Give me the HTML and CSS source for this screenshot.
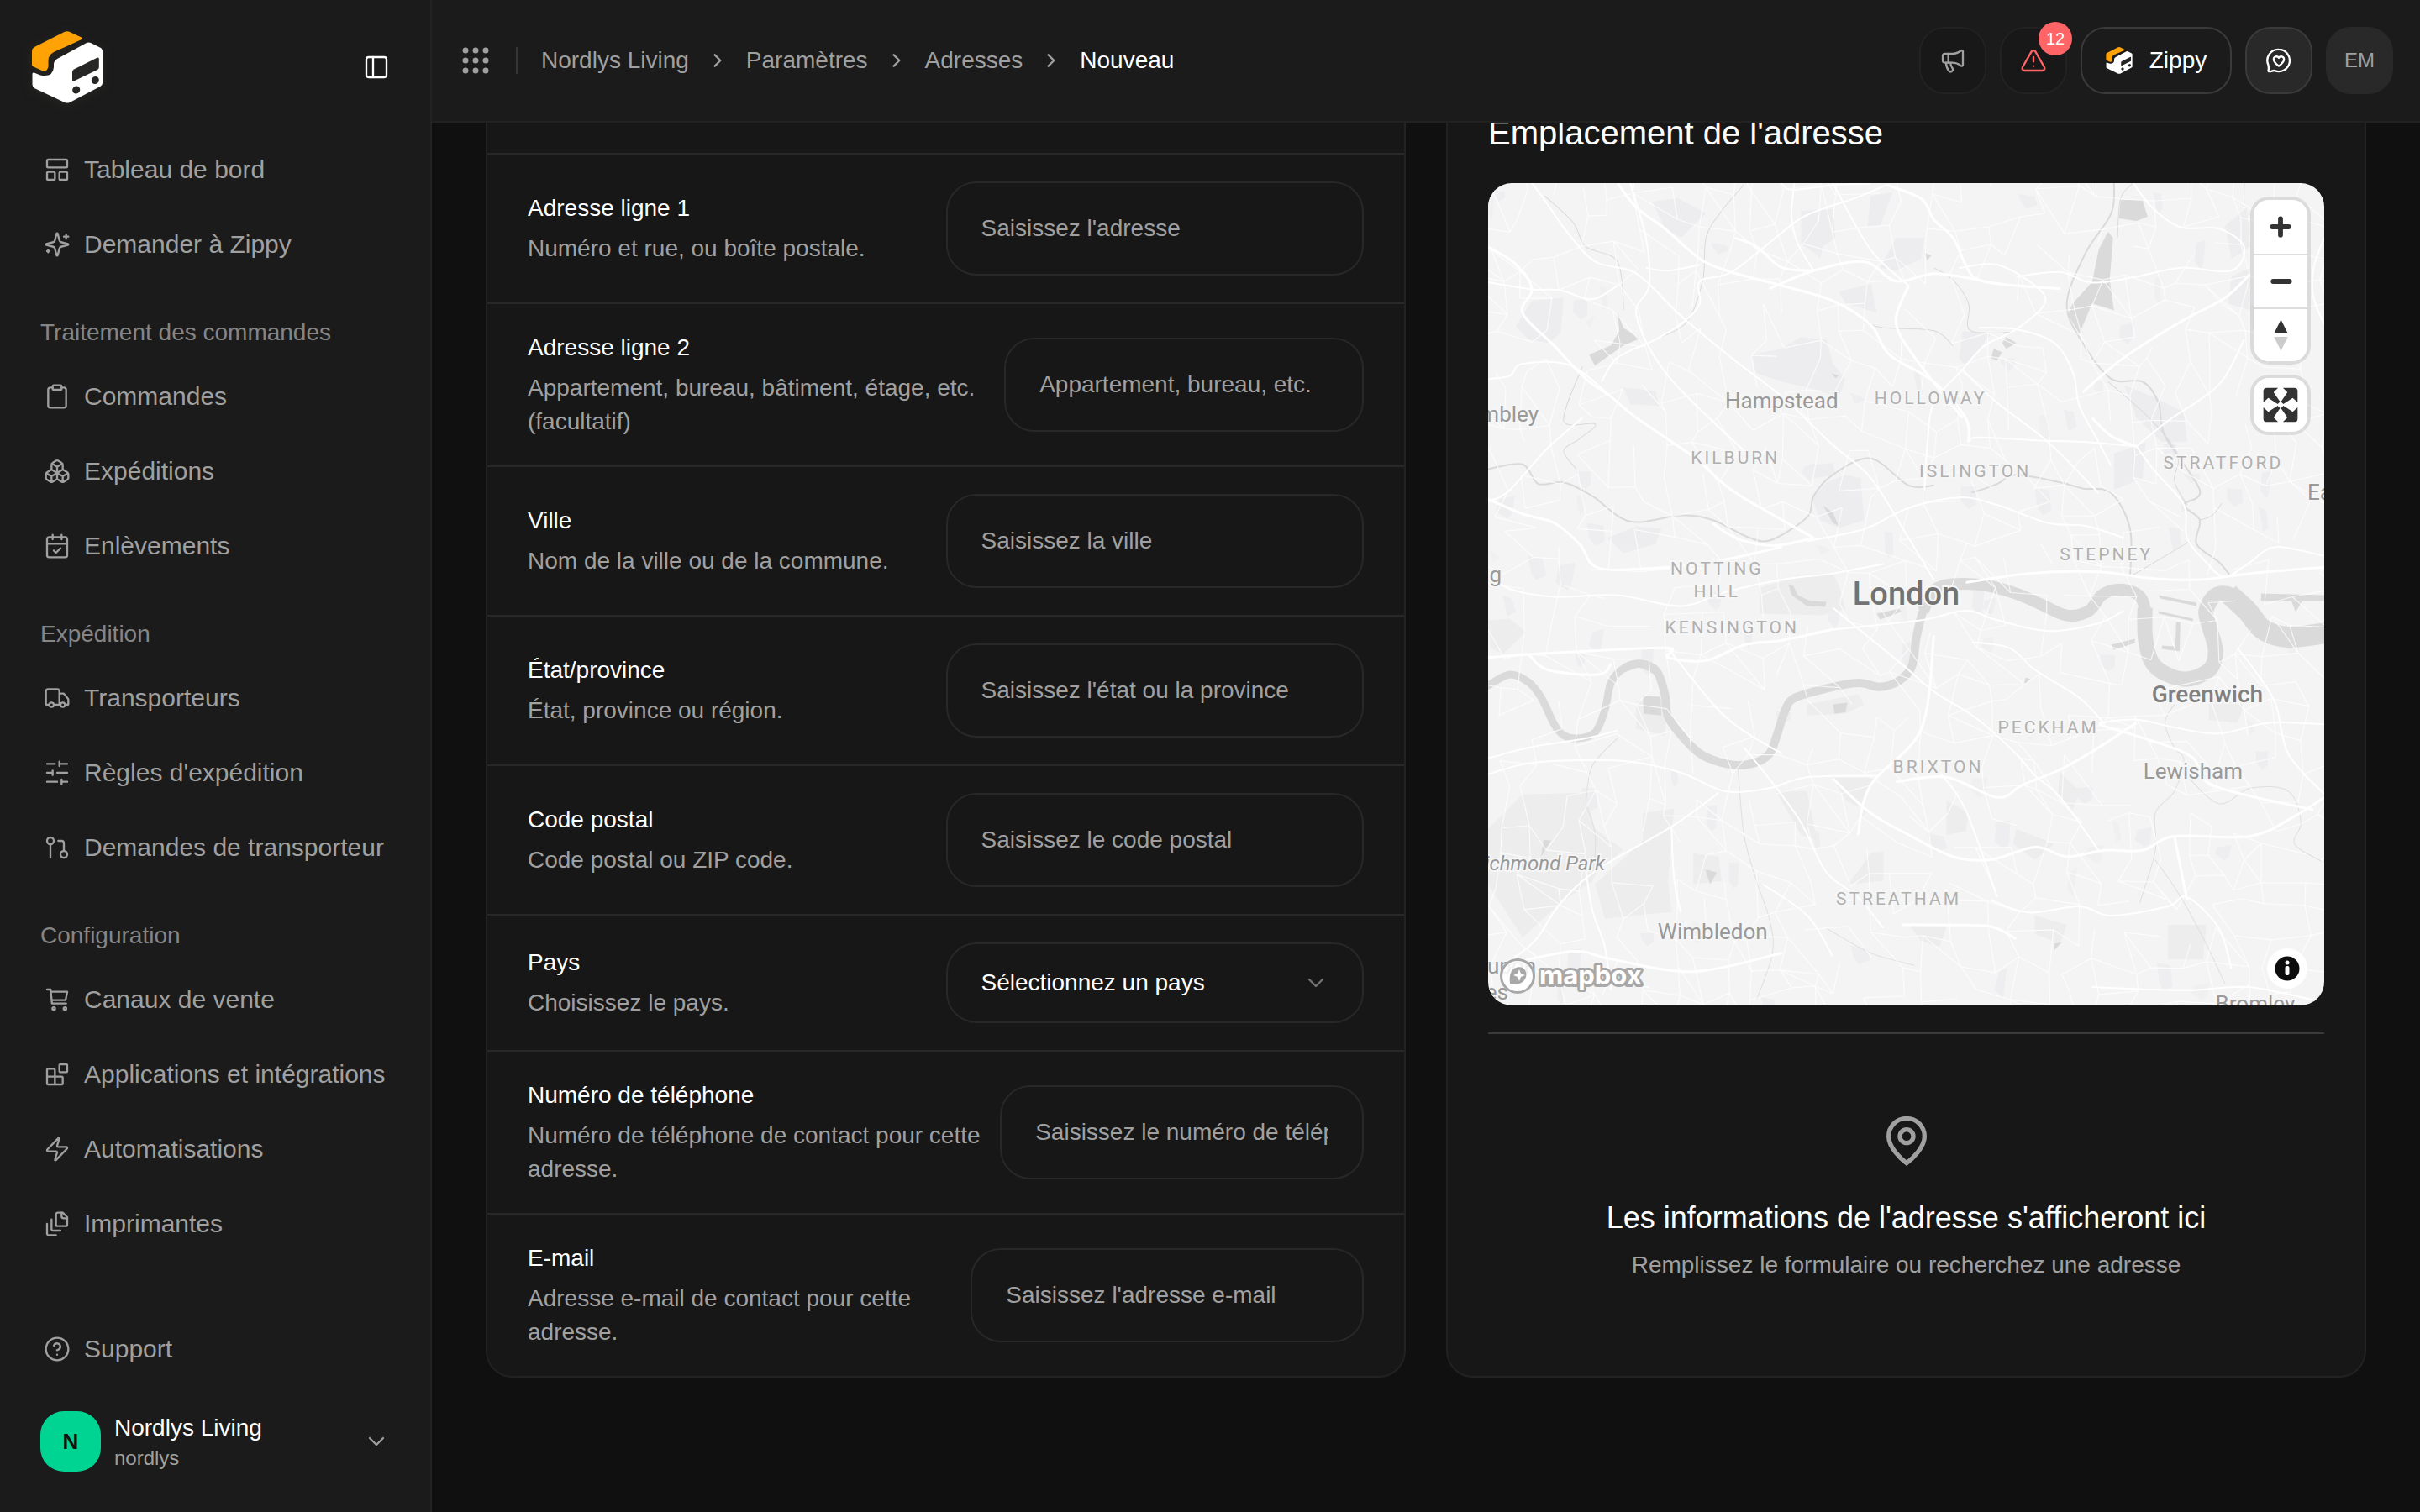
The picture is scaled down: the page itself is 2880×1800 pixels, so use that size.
FILE: index.html
```html
<!DOCTYPE html>
<html lang="fr">
<head>
<meta charset="utf-8">
<meta name="viewport" content="width=device-width, initial-scale=1">
<title>Nouvelle adresse</title>
<link rel="stylesheet" href="styles.css">
</head>
<body>
<svg class="sprite" aria-hidden="true">
  <symbol id="logo" viewBox="0 0 84 86">
    <path fill="#ffa205" d="M38.500 1Q42-.5 45 1L60 8Q60.500 9.500 58 10.500L26 25Q19.500 28.500 19.500 35V42Q18.500 48.500 13 47.500L1 42Q0 41 0 40V24Q0 20.500 3 19Z"/>
    <path fill="#fff" d="M.5 51Q.5 49 2.500 49.500L10 52.500Q25 55.500 26 43V39Q26.500 34.500 31 32.500L65 14Q67.500 12.800 70 14L81 19.500Q84 21 84 24V62Q84 64.500 81.500 65.700L45 85Q42 86.200 39 85L3 68Q.5 66.500.5 63.500Z"/>
    <path fill="#262624" d="M50 45.500L78 31.500Q79.800 31 79.800 33V43Q79.800 45 78 46L50 59.500Q48 60 48 58V49Q48 46.500 50 45.500Z"/>
    <ellipse fill="#262624" cx="52.700" cy="70" rx="4.600" ry="4.400" transform="rotate(-35 52.700 70)"/>
    <ellipse fill="#262624" cx="75.300" cy="58.500" rx="4.600" ry="4.400" transform="rotate(-35 75.300 58.500)"/>
  </symbol>
  <symbol id="right" viewBox="0 0 24 24"><path d="m9.500 17 5-5-5-5"/></symbol>
  <symbol id="down" viewBox="0 0 24 24"><path d="m6 9 6 6 6-6"/></symbol>
</svg>

<div class="app">
  <aside class="sidebar">
    <div class="brand">
      <a href="#" aria-label="Accueil"><svg class="brand-logo"><use href="#logo"/></svg></a>
      <button class="bare" type="button" aria-label="Réduire le menu">
        <svg class="icon" viewBox="0 0 24 24"><rect x="3" y="3" width="18" height="18" rx="2"/><path d="M9 3v18"/></svg>
      </button>
    </div>

    <nav class="nav" aria-label="Navigation principale">
      <div class="nav-group">
        <a class="nav-link" href="#"><svg class="icon" viewBox="0 0 24 24"><rect x="3" y="3" width="18" height="7" rx="1"/><rect x="3" y="14" width="7" height="7" rx="1"/><rect x="14" y="14" width="7" height="7" rx="1"/></svg>Tableau de bord</a>
        <a class="nav-link" href="#"><svg class="icon" viewBox="0 0 24 24"><path d="M9.937 15.500A2 2 0 0 0 8.500 14.063l-6.135-1.582a.5.5 0 0 1 0-.962L8.500 9.936A2 2 0 0 0 9.937 8.500l1.582-6.135a.5.5 0 0 1 .963 0L14.063 8.500A2 2 0 0 0 15.500 9.937l6.135 1.581a.5.5 0 0 1 0 .964L15.500 14.063a2 2 0 0 0-1.437 1.437l-1.582 6.135a.5.5 0 0 1-.963 0z"/><path d="M20 3v4M22 5h-4M4 17v2M5 18H3"/></svg>Demander à Zippy</a>
      </div>
      <div class="nav-group">
        <h2 class="nav-title">Traitement des commandes</h2>
        <a class="nav-link" href="#"><svg class="icon" viewBox="0 0 24 24"><rect x="8" y="2" width="8" height="4" rx="1"/><path d="M16 4h2a2 2 0 0 1 2 2v14a2 2 0 0 1-2 2H6a2 2 0 0 1-2-2V6a2 2 0 0 1 2-2h2"/></svg>Commandes</a>
        <a class="nav-link" href="#"><svg class="icon" viewBox="0 0 24 24"><path d="M2.970 12.920A2 2 0 0 0 2 14.630v3.240a2 2 0 0 0 .97 1.710l3 1.800a2 2 0 0 0 2.060 0L12 19v-5.500l-5-3zM7 16.500l-4.740-2.850M7 16.500l5-3M7 16.500v5.170M12 13.500V19l3.970 2.380a2 2 0 0 0 2.060 0l3-1.800a2 2 0 0 0 .97-1.710v-3.240a2 2 0 0 0-.97-1.710L17 10.500zM17 16.500l-5-3M17 16.500l4.740-2.850M17 16.500v5.170M7.970 4.420A2 2 0 0 0 7 6.130v4.370l5 3 5-3V6.130a2 2 0 0 0-.97-1.710l-3-1.800a2 2 0 0 0-2.060 0zM12 8 7.260 5.150M12 8l4.740-2.850M12 13.500V8"/></svg>Expéditions</a>
        <a class="nav-link" href="#"><svg class="icon" viewBox="0 0 24 24"><path d="M8 2v4M16 2v4M3 10h18M9 16l2 2 4-4"/><rect x="3" y="4" width="18" height="18" rx="2"/></svg>Enlèvements</a>
      </div>
      <div class="nav-group">
        <h2 class="nav-title">Expédition</h2>
        <a class="nav-link" href="#"><svg class="icon" viewBox="0 0 24 24"><path d="M14 18V6a2 2 0 0 0-2-2H4a2 2 0 0 0-2 2v11a1 1 0 0 0 1 1h2M15 18H9M19 18h2a1 1 0 0 0 1-1v-3.650a1 1 0 0 0-.22-.624l-3.480-4.350A1 1 0 0 0 17.520 8H14"/><circle cx="17" cy="18" r="2"/><circle cx="7" cy="18" r="2"/></svg>Transporteurs</a>
        <a class="nav-link" href="#"><svg class="icon" viewBox="0 0 24 24"><path d="M21 4h-7M10 4H3M21 12h-9M8 12H3M21 20h-5M12 20H3M14 2v4M8 10v4M16 18v4"/></svg>Règles d'expédition</a>
        <a class="nav-link" href="#"><svg class="icon" viewBox="0 0 24 24"><circle cx="18" cy="18" r="3"/><circle cx="6" cy="6" r="3"/><path d="M13 6h3a2 2 0 0 1 2 2v7M6 9v12"/></svg>Demandes de transporteur</a>
      </div>
      <div class="nav-group">
        <h2 class="nav-title">Configuration</h2>
        <a class="nav-link" href="#"><svg class="icon" viewBox="0 0 24 24"><path d="M3 3h3.200l1.200 12.500H20M6.500 5H21l-1.500 7.500H7.200"/><circle cx="9" cy="20" r="1.200"/><circle cx="19" cy="20" r="1.200"/></svg>Canaux de vente</a>
        <a class="nav-link" href="#"><svg class="icon" viewBox="0 0 24 24"><rect x="14" y="3" width="7" height="7" rx="1"/><path d="M10 21V8a1 1 0 0 0-1-1H4a1 1 0 0 0-1 1v12a1 1 0 0 0 1 1h12a1 1 0 0 0 1-1v-5a1 1 0 0 0-1-1H3"/></svg>Applications et intégrations</a>
        <a class="nav-link" href="#"><svg class="icon" viewBox="0 0 24 24"><path d="M4 14a1 1 0 0 1-.78-1.630l9.900-10.200a.5.5 0 0 1 .86.460l-1.920 6.020A1 1 0 0 0 13 10h7a1 1 0 0 1 .78 1.630l-9.900 10.200a.5.5 0 0 1-.86-.46l1.920-6.020A1 1 0 0 0 11 14z"/></svg>Automatisations</a>
        <a class="nav-link" href="#"><svg class="icon" viewBox="0 0 24 24"><path d="M21 7h-3a2 2 0 0 1-2-2V2"/><path d="M21 6v6.500c0 .8-.7 1.500-1.500 1.500h-7c-.8 0-1.500-.7-1.500-1.500v-9c0-.8.7-1.500 1.500-1.500H17Z"/><path d="M7 8v8.800c0 .3.2.6.4.8.2.2.5.4.8.4H15M3 12v8.800c0 .3.200.6.400.8.2.2.5.4.800.4H11"/></svg>Imprimantes</a>
      </div>
    </nav>

    <div class="side-foot">
      <a class="nav-link" href="#"><svg class="icon" viewBox="0 0 24 24"><circle cx="12" cy="12" r="10"/><path d="M9.090 9a3 3 0 0 1 5.830 1c0 2-3 3-3 3M12 17h.01"/></svg>Support</a>
      <button class="org" type="button">
        <span class="org-mark">N</span>
        <span class="org-text"><span class="org-name">Nordlys Living</span><span class="org-slug">nordlys</span></span>
        <svg class="icon"><use href="#down"/></svg>
      </button>
    </div>
  </aside>

  <div class="page">
    <header class="topbar">
      <button class="bare apps" type="button" aria-label="Applications">
        <svg class="dots" viewBox="0 0 32 32"><circle cx="4" cy="4" r="3.500"/><circle cx="16" cy="4" r="3.500"/><circle cx="28" cy="4" r="3.500"/><circle cx="4" cy="16" r="3.500"/><circle cx="16" cy="16" r="3.500"/><circle cx="28" cy="16" r="3.500"/><circle cx="4" cy="28" r="3.500"/><circle cx="16" cy="28" r="3.500"/><circle cx="28" cy="28" r="3.500"/></svg>
      </button>
      <nav class="crumbs" aria-label="Fil d'Ariane">
        <a href="#">Nordlys Living</a><svg class="icon"><use href="#right"/></svg>
        <a href="#">Paramètres</a><svg class="icon"><use href="#right"/></svg>
        <a href="#">Adresses</a><svg class="icon"><use href="#right"/></svg>
        <span class="current" aria-current="page">Nouveau</span>
      </nav>
      <div class="actions">
        <button class="tile" type="button" aria-label="Annonces">
          <svg class="icon" viewBox="0 0 24 24"><path d="M11 6a13 13 0 0 0 8.400-2.800A1 1 0 0 1 21 4v12a1 1 0 0 1-1.600.8A13 13 0 0 0 11 14H5a2 2 0 0 1-2-2V8a2 2 0 0 1 2-2z"/><path d="M6 14a12 12 0 0 0 2.400 7.200 2 2 0 0 0 3.200-2.400A8 8 0 0 1 10 14M8 6v8"/></svg>
        </button>
        <button class="tile tile-alert" type="button" aria-label="Alertes">
          <svg class="icon" viewBox="0 0 24 24"><path d="m21.730 18-8-14a2 2 0 0 0-3.480 0l-8 14A2 2 0 0 0 4 21h16a2 2 0 0 0 1.730-3M12 9v4M12 17h.01"/></svg>
          <span class="badge">12</span>
        </button>
        <button class="tile tile-zippy" type="button"><svg class="zippy-logo"><use href="#logo"/></svg>Zippy</button>
        <button class="tile tile-chat" type="button" aria-label="Messagerie">
          <svg class="icon" viewBox="0 0 24 24"><path d="M12 2.200a9.800 9.800 0 1 1-3.700 18.900c-1.500-.5-2.900.9-4.700.8a.9.900 0 0 1-.9-1.200c.5-1.300.2-2.700-.1-4.700A9.800 9.800 0 0 1 12 2.200Z"/><path d="M12 17c-2.600-2.100-4.600-3.700-4.600-6A2.500 2.500 0 0 1 12 9.600a2.500 2.500 0 0 1 4.600 1.400c0 2.300-2 3.900-4.600 6Z"/></svg>
        </button>
        <button class="tile tile-user" type="button">EM</button>
      </div>
    </header>

    <main class="viewport">
      <div class="columns">
        <form class="card form">
          <div class="row">
            <div class="info"><label for="l1">Adresse ligne 1</label><p>Numéro et rue, ou boîte postale.</p></div>
            <input id="l1" type="text" placeholder="Saisissez l'adresse">
          </div>
          <div class="row row-line2">
            <div class="info"><label for="l2">Adresse ligne 2</label><p>Appartement, bureau, bâtiment, étage, etc. (facultatif)</p></div>
            <input id="l2" type="text" placeholder="Appartement, bureau, etc.">
          </div>
          <div class="row">
            <div class="info"><label for="city">Ville</label><p>Nom de la ville ou de la commune.</p></div>
            <input id="city" type="text" placeholder="Saisissez la ville">
          </div>
          <div class="row">
            <div class="info"><label for="state">État/province</label><p>État, province ou région.</p></div>
            <input id="state" type="text" placeholder="Saisissez l'état ou la province">
          </div>
          <div class="row">
            <div class="info"><label for="zip">Code postal</label><p>Code postal ou ZIP code.</p></div>
            <input id="zip" type="text" placeholder="Saisissez le code postal">
          </div>
          <div class="row">
            <div class="info"><label for="country">Pays</label><p>Choisissez le pays.</p></div>
            <div class="select"><select id="country"><option>Sélectionnez un pays</option></select><svg class="icon"><use href="#down"/></svg></div>
          </div>
          <div class="row row-phone">
            <div class="info"><label for="phone">Numéro de téléphone</label><p>Numéro de téléphone de contact pour cette adresse.</p></div>
            <input id="phone" type="tel" placeholder="Saisissez le numéro de téléphone">
          </div>
          <div class="row row-email">
            <div class="info"><label for="email">E-mail</label><p>Adresse e-mail de contact pour cette adresse.</p></div>
            <input id="email" type="email" placeholder="Saisissez l'adresse e-mail">
          </div>
        </form>

        <section class="card place">
          <h1>Emplacement de l'adresse</h1>
          <div class="map">
            <svg class="map-canvas" id="map" viewBox="0 0 994 978" preserveAspectRatio="xMidYMid slice" role="img" aria-label="Carte de Londres">
              <g id="land"></g><g id="water"></g><g id="roads"></g>
              <g class="labels">
                <g class="town"><text x="349" y="268">Hampstead</text><text x="60" y="284" text-anchor="end">Wembley</text><text x="974" y="377" text-anchor="start">East Ham</text><text x="838" y="708">Lewisham</text><text x="267" y="899">Wimbledon</text><text x="912" y="985">Bromley</text><text x="16" y="475" text-anchor="end">Ealing</text><text x="57" y="940" text-anchor="end">Kingston upon</text><text x="24" y="971" text-anchor="end">Thames</text></g>
                <text class="park" x="139" y="817" text-anchor="end">Richmond Park</text>
                <g class="district"><text x="526" y="263">HOLLOWAY</text><text x="294" y="334">KILBURN</text><text x="579" y="350">ISLINGTON</text><text x="874" y="340">STRATFORD</text><text x="735" y="449">STEPNEY</text><text x="272" y="466">NOTTING</text><text x="272" y="493">HILL</text><text x="290" y="535">KENSINGTON</text><text x="666" y="654">PECKHAM</text><text x="535" y="701">BRIXTON</text><text x="488" y="858">STREATHAM</text></g>
                <text class="borough" x="855" y="617">Greenwich</text>
                <text class="city" x="497" y="502">London</text>
              </g>
            </svg>
            <div class="map-controls">
              <div class="control-group">
                <button type="button" aria-label="Zoom avant"><svg viewBox="0 0 64 64"><path class="bar" d="M22 32h20M32 22v20"/></svg></button>
                <button type="button" aria-label="Zoom arrière"><svg viewBox="0 0 64 64"><path class="bar" d="M23 32h20"/></svg></button>
                <button type="button" aria-label="Orienter vers le nord"><svg viewBox="0 0 64 64"><path fill="#333" d="M24 30h17L32.500 13z"/><path fill="#ccc" d="M24 34h17L32.500 51z"/></svg></button>
              </div>
              <div class="control-group">
                <button type="button" aria-label="Plein écran"><svg viewBox="0 0 64 64"><path fill="#333" d="M11 15Q11 11 15 11H29L23.500 16.500 31.500 28 28.500 31 17 23.500 11 29Z"/><path fill="#333" d="M53 15Q53 11 49 11H35L40.500 16.500 32.500 28 35.500 31 47 23.500 53 29Z"/><path fill="#333" d="M11 49Q11 53 15 53H29L23.500 47.500 31.500 36 28.500 33 17 40.500 11 35Z"/><path fill="#333" d="M53 49Q53 53 49 53H35L40.500 47.500 32.500 36 35.500 33 47 40.500 53 35Z"/></svg></button>
              </div>
            </div>
            <a class="mapbox" href="#" aria-label="mapbox">
              <svg viewBox="0 0 184 48"><circle cx="24" cy="24" r="19.500" fill="#fff" fill-opacity=".85" stroke="#a8a8a8" stroke-width="3"/><path fill="#a8a8a8" d="M15 33c-1-11 1-15 5-18 5-3 11-2 13 2 3 5 1 11-3 14s-9 3-15 2Z"/><path fill="#fff" d="m26 16 2 5 5 2-5 2-2 5-2-5-5-2 5-2Z"/><text x="50" y="34">mapbox</text></svg>
            </a>
            <button class="map-info" type="button" aria-label="Attribution"><svg viewBox="0 0 48 48"><circle cx="24" cy="24" r="14.500" fill="#0d0d0d"/><circle cx="24" cy="17" r="2.500" fill="#fff"/><rect x="21.500" y="21" width="5" height="11" rx="2" fill="#fff"/></svg></button>
          </div>
          <div class="empty">
            <svg class="pin" viewBox="0 0 24 24"><path d="M20 10c0 4.993-5.539 10.193-8 12-2.461-1.807-8-7.007-8-12a8 8 0 0 1 16 0"/><circle cx="12" cy="10" r="3"/></svg>
            <h2>Les informations de l'adresse s'afficheront ici</h2>
            <p>Remplissez le formulaire ou recherchez une adresse</p>
          </div>
        </section>
      </div>
    </main>
  </div>
</div>
<script src="map.js"></script>
</body>
</html>
```
FILE: styles.css
```css
:root {
  --bg: #101010;
  --panel: #1b1b1b;
  --card: #171717;
  --line: #282828;
  --edge: #222;
  --muted: #a0a0a0;
  --text: #fff;
}
* { box-sizing: border-box; margin: 0; }
body {
  background: var(--bg);
  color: var(--text);
  font: 28px/40px "Liberation Sans", Arial, sans-serif;
}
a { color: inherit; text-decoration: none; }
button, input, select { font: inherit; color: inherit; }
button { cursor: pointer; border: 0; background: none; padding: 0; }
.sprite { position: absolute; width: 0; height: 0; }
.icon {
  width: 32px; height: 32px; flex: none;
  fill: none; stroke: currentColor; stroke-width: 1.75;
  stroke-linecap: round; stroke-linejoin: round;
}
.bare { display: flex; }
.app { display: flex; min-height: 100vh; }

/* Sidebar */
.sidebar {
  width: 514px; flex: none;
  display: flex; flex-direction: column;
  background: var(--panel);
  border-right: 2px solid var(--edge);
}
.brand {
  height: 162px; flex: none;
  display: flex; align-items: center; justify-content: space-between;
  padding: 0 48px 2px 38px;
}
.brand-logo { display: block; width: 84px; height: 86px; filter: drop-shadow(0 2px 6px #282722); }
.nav { display: flex; flex-direction: column; gap: 32px; padding: 0 16px; }
.nav-group { display: flex; flex-direction: column; gap: 9px; }
.nav-title {
  height: 60px; padding: 0 32px;
  font-size: 28px; line-height: 66px; font-weight: 400; color: #858585;
}
.nav-link {
  height: 80px; padding: 0 36px;
  display: flex; align-items: center; gap: 16px;
  font-size: 30px; color: var(--muted); white-space: nowrap;
}
.side-foot { margin-top: auto; padding: 0 16px 32px; display: flex; flex-direction: column; gap: 18px; }
.org { height: 104px; padding: 0 32px; display: flex; align-items: center; gap: 16px; text-align: left; }
.org-mark {
  width: 72px; height: 72px; border-radius: 28px; flex: none;
  display: grid; place-items: center;
  background: #00d492; color: #111; font-size: 26px; font-weight: 700;
}
.org-text { flex: 1; display: flex; flex-direction: column; }
.org-name { line-height: 40px; }
.org-slug { font-size: 24px; line-height: 32px; color: var(--muted); }
.org .icon { color: var(--muted); }

/* Top bar */
.page { flex: 1; min-width: 0; display: flex; flex-direction: column; }
.topbar {
  height: 146px; flex: none;
  display: flex; align-items: center;
  padding: 0 32px 0 36px;
  background: var(--panel);
  border-bottom: 2px solid var(--edge);
}
.apps { padding-right: 32px; }
.dots { width: 32px; height: 32px; fill: var(--muted); }
.crumbs {
  display: flex; align-items: center; gap: 18px;
  color: var(--muted);
}
.crumbs::before { content: ""; width: 2px; height: 32px; margin-right: 10px; background: #353535; }
.crumbs .current { color: var(--text); }
.actions { margin-left: auto; display: flex; gap: 16px; }
.tile {
  position: relative;
  width: 80px; height: 80px; border-radius: 30px;
  display: flex; align-items: center; justify-content: center;
  background: #181818; border: 2px solid #222; color: var(--muted);
}
.tile-alert { color: #ff6467; }
.tile-zippy { width: 180px; gap: 20px; background: var(--panel); border-color: #3a3a3a; color: var(--text); }
.zippy-logo { width: 32px; height: 32px; }
.tile-chat { background: #292929; border-color: #3a3a3a; color: var(--text); }
.tile-user { background: #292929; border-color: #292929; font-size: 24px; }
.badge {
  position: absolute; top: -8px; right: -8px;
  width: 40px; height: 40px; border-radius: 20px;
  background: #ff6467; color: #fff; font-size: 20px; line-height: 40px; text-align: center;
}

/* Content, scrolled below the top bar */
.viewport { flex: 1; overflow: hidden; padding: 0 64px 160px; }
.columns {
  margin-top: -66px;
  display: grid; grid-template-columns: 1fr 1fr; gap: 48px;
}
.card { min-width: 0; background: var(--card); border: 2px solid var(--edge); border-radius: 32px; }
.form { padding-top: 100px; }
.row {
  display: grid; grid-template-columns: 1fr 1fr; align-items: center;
  padding: 32px 48px; border-top: 2px solid var(--line);
}
.row-line2 { grid-template-columns: 57fr 43fr; }
.row-phone { grid-template-columns: 113fr 87fr; }
.row-email { grid-template-columns: 53fr 47fr; }
.info { padding-right: 16px; }
.info label { display: block; padding-bottom: 8px; }
.info p { color: var(--muted); }
input, select {
  width: 100%; min-width: 0; height: 112px; padding: 0 40px;
  background: var(--card); border: 2px solid var(--line); border-radius: 36px; outline: 0;
}
input::placeholder { color: var(--muted); opacity: 1; }
.select { position: relative; }
select { display: block; height: 96px; appearance: none; }
.select .icon { position: absolute; right: 41px; top: 32px; color: #737373; pointer-events: none; }

.place { display: flex; flex-direction: column; padding: 48px; }
.place h1 { padding-bottom: 32px; font-size: 40px; line-height: 56px; font-weight: 400; }
.empty {
  flex: 1; margin-top: 32px; padding-top: 32px; border-top: 2px solid #3a3a3a;
  display: flex; flex-direction: column; align-items: center; justify-content: center;
}
.pin { width: 64px; height: 64px; margin-bottom: 32px; fill: none; stroke: var(--muted); stroke-width: 2; }
.empty h2 { padding-bottom: 8px; font-size: 36px; line-height: 56px; font-weight: 400; }
.empty p { color: var(--muted); }

/* Map */
.map { position: relative; aspect-ratio: 994 / 978; overflow: hidden; border-radius: 28px; background: #f4f4f4; }
.map-canvas { display: block; width: 100%; height: 100%; }
.labels text { font-family: Roboto, sans-serif; text-anchor: middle; paint-order: stroke; stroke: #f6f6f6; stroke-width: 4px; }
.labels text[text-anchor="end"] { text-anchor: end; }
.labels text[text-anchor="start"] { text-anchor: start; }
.town text { font-size: 26px; fill: #999; }
.district text { font-size: 21px; letter-spacing: 3px; fill: #b0b0b0; }
.labels .park { font-size: 24px; font-style: italic; fill: #999; }
.labels .borough { font-size: 28px; font-weight: 500; fill: #808080; }
.labels .city { font-size: 38px; font-weight: 500; fill: #737373; }
.map-controls { position: absolute; top: 20px; right: 20px; display: flex; flex-direction: column; gap: 20px; }
.control-group { width: 64px; border-radius: 18px; overflow: hidden; background: #fff; box-shadow: 0 0 0 4px rgba(0, 0, 0, .1); }
.control-group button { display: block; width: 64px; height: 64px; }
.control-group button + button { border-top: 2px solid #ddd; }
.control-group svg { display: block; width: 64px; height: 62px; }
.bar { fill: none; stroke: #333; stroke-width: 6; stroke-linecap: round; }
.mapbox { position: absolute; left: 11px; bottom: 11px; width: 184px; height: 48px; }
.mapbox svg { display: block; }
.mapbox text { font: 700 31px Inter, sans-serif; fill: #fff; stroke: #a8a8a8; stroke-width: 6px; paint-order: stroke; stroke-linejoin: round; }
.map-info { position: absolute; right: 20px; bottom: 20px; width: 48px; height: 48px; border-radius: 24px; background: #fff; }
.map-info svg { display: block; }
```
FILE: map.js
```js
// Base map: hand-traced rivers, parks and main roads over a seeded street mesh.
const north = ([x, y]) => [x / 1.329 - 72, y / 2.8 - 78];
const south = ([x, y]) => [x / 1.329 - 72, y / 2.703 + 442];
const same = p => p;
const NS = 'http://www.w3.org/2000/svg';

function points(text, project) {
  return text.trim().split(/\s+/).map(pair => project(pair.split(',').map(Number)));
}
function curve(pts) {
  let d = `M${pts[0].map(Math.round)}`;
  for (let i = 0; i < pts.length - 1; i++) {
    const a = pts[i - 1] || pts[i], b = pts[i], c = pts[i + 1], e = pts[i + 2] || c;
    const n = [b[0] + (c[0] - a[0]) / 6, b[1] + (c[1] - a[1]) / 6, c[0] - (e[0] - b[0]) / 6, c[1] - (e[1] - b[1]) / 6, c[0], c[1]];
    d += 'C' + n.map(v => v.toFixed(1)).join(' ');
  }
  return d;
}
function add(layer, d, attrs) {
  const path = document.createElementNS(NS, 'path');
  path.setAttribute('d', d);
  for (const key in attrs) path.setAttribute(key, attrs[key]);
  document.getElementById(layer).appendChild(path);
}
const line = (layer, text, project, color, width) =>
  add(layer, curve(points(text, project)), { fill: 'none', stroke: color, 'stroke-width': width, 'stroke-linejoin': 'round' });
const area = (layer, text, project, color) =>
  add(layer, 'M' + points(text, project).map(p => p.map(Math.round)).join('L') + 'Z', { fill: color });

let seed = 11;
const rnd = () => (seed = (seed * 16807) % 2147483647) / 2147483647;

// Small greens
for (let i = 0; i < 85; i++) {
  const x = rnd() * 994, y = rnd() * 978, w = 6 + rnd() * 14, h = 8 + rnd() * 20, t = rnd() * 10 - 5;
  area('land', `${x},${y} ${x + w},${y + t} ${x + w + t},${y + h} ${x + w / 2},${y + h + 5} ${x + t},${y + h - 4}`, same, i % 4 ? '#eeeef0' : '#f0f0f0');
}
// Parks
[
  '510,790 560,770 590,730 630,740 640,820 660,870 650,930 600,900 560,880 520,850',
  '630,1215 660,1190 685,1200 690,1340 650,1365 620,1340 608,1270',
  '165,610 215,600 210,720 190,750 160,740 140,695', '590,310 640,305 645,400 610,450 590,420',
  '700,260 735,250 715,360 695,365', '740,400 785,400 780,470 740,510 715,500', '650,580 700,555 710,650 660,620',
  '845,710 890,720 850,830 840,800', '1100,890 1145,930 1195,980 1200,1080 1160,1080 1120,1000', '1085,1120 1135,1080 1130,1200 1085,1240',
  '285,1400 330,1360 370,1370 360,1420 310,1450', '1260,360 1295,300 1300,430 1270,470', '1270,530 1300,500 1300,640 1265,620',
  '600,1160 640,1150 645,1190 610,1200', '355,280 395,270 440,320 400,400 375,370', '310,900 360,910 365,960 320,955'
].forEach(p => area('land', p, north, '#ededef'));
[
  '525,105 600,65 640,60 650,100 660,175 620,195 525,190', '96,880 150,770 250,765 265,880 310,950 270,1010 260,1050 210,1120 150,1230 96,1060',
  '340,830 390,815 380,1050 385,1150 330,1160 280,1170 265,1060 340,920', '600,480 680,450 690,480 660,510 600,515',
  '640,715 710,715 680,810 660,790', '820,790 855,830 850,890 820,900', '1000,700 1030,760 1020,820 995,770', '96,210 130,205 155,250 120,320 100,300',
  '1235,460 1290,480 1280,540 1235,530', '760,1190 820,1195 810,1260 780,1240', '960,1160 1010,1190 1000,1250 960,1220', '1170,1190 1230,1190 1225,1300 1170,1300',
  '550,760 600,760 615,920 590,900', '700,960 720,955 720,1050 665,1060', '330,470 380,460 375,580 330,560', '930,880 990,930 960,980 925,930', '420,960 460,970 465,1050 420,1060'
].forEach(p => area('land', p, south, '#ededee'));

// Lakes, reservoirs and docks
[
  '1075,380 1083,400 1078,540 1085,640 1050,620 1030,720 1012,655 1020,620 1050,550 1060,440', '1095,275 1130,275 1138,330 1120,345 1092,335',
  '300,650 310,700 335,735 310,760 265,825 255,790 290,760 303,710', '915,730 930,750 915,770 908,750', '895,770 908,780 900,810 890,800',
  '625,1290 640,1315 650,1360 640,1350', '785,450 796,460 790,475', '638,850 650,860 645,868'
].forEach(p => area('water', p, north, '#dadada'));
[
  '570,95 578,100 585,130 605,150 630,152 628,168 600,165 575,130', '710,190 745,172 748,185 715,208', '340,455 368,458 370,515 342,510',
  '640,480 663,475 660,505 643,512', '1155,130 1215,155 1215,165 1157,140', '1155,180 1210,205 1210,214 1155,190', '1183,215 1189,215 1188,310 1160,302 1160,292 1182,294',
  '1317,125 1417,130 1417,150 1317,148', '1365,150 1382,150 1372,185', '1080,290 1118,270 1118,285 1085,305', '438,1010 457,1022 447,1060', '183,915 196,920 180,970', '945,395 953,400 942,420', '990,1250 1002,1245 990,1270'
].forEach(p => area('water', p, south, '#dadada'));

// Streams and canals
[
  '96,1170 150,1155 175,1220 215,1215 260,1260 320,1345 400,1325 450,1340 510,1400 545,1405 600,1330 610,1260 640,1190 700,1135 760,1225 800,1225',
  '860,1250 900,1220 930,1190 1000,1215 1035,1235 1080,1250 1110,1370 1110,1530',
  '1085,218 1080,320 1040,450 1010,620 1035,750 1080,870 1130,880 1155,950 1165,1060 1220,1240 1195,1290 1220,1340 1215,1420 1250,1480 1270,1530',
  '1255,1285 1240,1325 1220,1340', '1115,218 1095,270 1090,400', '1075,880 1140,1000 1185,1120 1180,1210 1200,1290', '1290,218 1290,300',
  '185,260 230,350 250,430 300,480 310,640', '500,225 465,310 440,400 435,540 410,680 370,730', '245,830 215,1010 265,1020 240,1070 215,1110 235,1170', '690,680 720,700 800,710 830,760', '800,500 830,540 855,620 858,710 925,715', '1110,1530 1205,1410'
].forEach((p, i) => line('water', p, north, '#dadada', i < 3 ? 2 : 1));
[
  '490,680 500,900 520,1050 540,1170 545,1280 520,1430', '250,800 265,900 262,1020', '300,590 260,680 250,800', '1180,480 1165,540 1180,620 1195,660 1180,760 1150,830 1150,950 1125,1120',
  '1195,700 1250,800 1300,750 1360,760 1380,860 1370,930 1417,990', '1150,980 1190,1100 1230,1250 1260,1380', '630,1200 700,1280 770,1320'
].forEach(p => line('water', p, south, '#dfdfdf', 1));

// Thames
line('water', '90,430 96,420 130,385 160,410 180,460 200,545 215,580 238,590 265,570 280,500 290,410 310,365 335,350 362,375', south, '#dadada', 9);
line('water', '310,365 335,350 362,375 375,450 380,520 405,590 435,645 480,675 515,670 540,640 552,580 565,500 580,460 630,430 680,412 715,425 745,405 765,360 772,270 783,180 800,115', south, '#dadada', 10);
line('water', '783,180 800,115 830,95 880,98 930,125 970,160 1010,195 1045,180 1065,130 1090,112 1120,125 1133,170 1135,280 1150,360', south, '#dadada', 14);
line('water', '1133,170 1135,280 1150,360 1195,400 1235,370 1245,310 1235,230 1230,180 1245,130 1270,130 1295,180', south, '#dadada', 18);
line('water', '1265,125 1295,180 1320,240 1360,265 1430,248', south, '#dadada', 25);

// Side streets
const step = 34, cols = 32, nodes = [];
for (let r = 0; r < 31; r++) for (let c = 0; c < cols; c++) nodes.push([(c - 1) * step + rnd() * 26, (r - 1) * step + rnd() * 26]);
let mesh = '';
nodes.forEach((p, i) => {
  const right = (i + 1) % cols && nodes[i + 1], below = nodes[i + cols], diag = (i + 1) % cols && nodes[i + cols + 1];
  [[right, .5], [below, .62], [diag, .2]].forEach(([q, chance]) => {
    if (q && rnd() < chance) mesh += `M${p.map(Math.round)}L${q.map(Math.round)}`;
  });
});
add('roads', mesh, { fill: 'none', stroke: '#fff', 'stroke-width': 1.2, 'stroke-opacity': .75 });

// Main roads
[
  '300,218 330,300 375,370 430,470 480,515 560,560 640,610 700,690 730,790 800,880 850,1000 855,1080',
  '96,548 165,572 210,575 260,605 300,560', '725,225 680,265 630,300 590,335 550,400 480,515 430,545 430,620 405,680 360,740 300,800 275,880',
  '725,225 780,270 800,340 830,400 850,490 870,540 930,560 1000,570', '430,490 380,510 345,500', '580,218 575,330 585,420 610,510',
  '96,430 140,490 165,572 150,650 200,760 250,870 290,930 330,1000 420,1130 480,1240 560,1340 610,1400', '96,870 130,860 150,820 225,825 290,930',
  '600,1410 690,1370 760,1300 840,1265 900,1290 980,1350 1040,1360 1100,1400', '610,1400 550,1425 500,1410 470,1380 450,1350', '855,1080 870,1065 960,1075 1035,1080 1120,1095',
  '1120,1095 1170,1010 1250,890 1290,740', '1120,1095 1080,1060 1050,1000', '870,700 930,705 990,750 1020,850 1030,960 1060,1080 1080,1160',
  '1115,218 1145,300 1190,365 1250,370 1290,430 1270,510 1190,500 1120,530 1050,550 1000,515 930,530', '1300,520 1260,600 1190,680 1100,800 1035,915',
  '1120,1095 1150,1180 1195,1290 1200,1400 1230,1480 1260,1530 1300,1480 1340,1430 1417,1460', '560,218 575,240 640,225 700,220',
  '96,1270 150,1320 200,1350 240,1420 270,1500 360,1500 450,1480 560,1430', '96,1280 130,1240 190,1100 245,1000', '1417,400 1400,500 1400,600 1417,690',
  '870,540 800,520 740,545 690,480 610,510 540,570', '165,218 190,290 220,380 265,480 330,520 400,660 480,800 560,930 640,1090 700,1200 760,1400 800,1540',
  '840,500 900,490 960,560 975,620 930,705 880,760 845,840 800,950 790,1080 785,1240', '485,400 520,430 560,500 610,510', '320,218 345,400 350,560 330,660 380,860 500,1110',
  '845,840 900,950 980,1080 1060,1250', '760,560 740,680 770,800 845,1000', '640,218 700,440 760,560'
].forEach((p, i) => line('roads', p, north, '#fff', i % 3 ? 2 : 3));
[
  '96,330 160,320 250,310 380,300 380,330 440,340 500,290 560,275 640,240', '96,655 160,620 250,590 300,565', '96,705 160,670 240,660 320,665 400,700 470,760 540,750 600,715 710,710',
  '160,320 190,370 270,385 290,350', '500,620 540,720 590,860 630,1020 680,1100 720,1200', '640,170 700,270 760,370 800,440 870,530 930,640 960,710 1000,780 1060,950',
  '800,260 780,560 700,740 680,900', '460,765 385,875 270,1010 210,1120 170,1240 120,1320', '385,875 390,1050 400,1150',
  '640,720 700,830 760,900 830,970 890,980 960,940 1010,970 1070,950 1130,950 1180,905 1300,905 1370,840 1417,780', '1060,540 1120,530 1180,555 1250,575 1330,540 1417,545',
  '1280,300 1310,380 1340,480 1360,640 1417,770', '750,1190 820,1190 890,1195 930,1235', '890,1110 950,1150 1030,1130 1080,1160 1170,1130 1200,1100 1250,1200 1270,1330',
  '250,1010 260,1140 280,1260 290,1400', '740,730 820,715 900,780 940,740 1000,690 1060,620 1120,540', '640,240 780,210 850,180 900,210 980,245 1060,220 1100,180',
  '96,60 130,110 200,135 300,130 400,165 470,120 560,80 640,60 720,30', '850,90 950,60 1060,55 1140,75 1220,80 1300,60 1417,40', '860,280 920,300 960,370 1030,460 1070,545',
  '530,1060 600,1160 640,1290', '1060,545 1200,640 1240,740 1400,820', '810,700 850,820 900,1100', '380,300 470,520 560,640', '120,1320 230,1275 290,1300 420,1340 560,1280',
  '96,1320 250,1360 350,1390', '1050,1390 1200,1400 1300,1390 1417,1440', '1200,1110 1180,905'
].forEach((p, i) => line('roads', p, south, '#fff', i % 3 ? 2 : 3));
```
